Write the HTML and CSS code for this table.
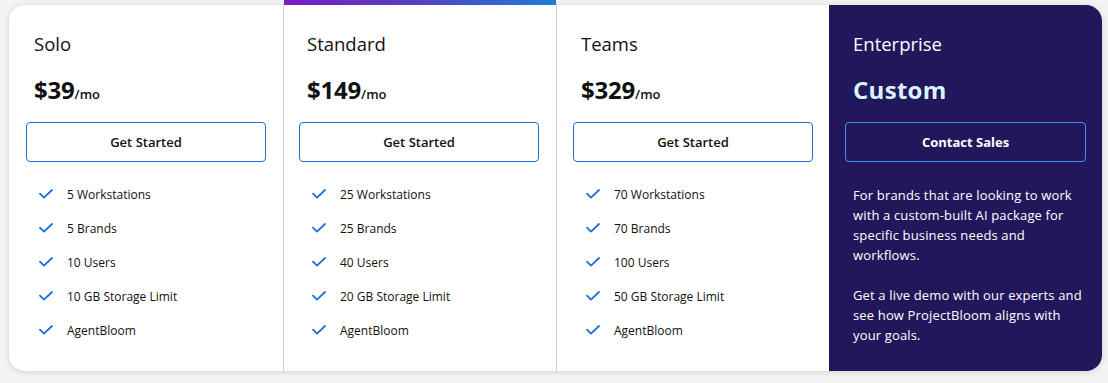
FILE: index.html
```html
<!DOCTYPE html>
<html>
<head>
<meta charset="utf-8">
<link rel="stylesheet" href="styles.css">
</head>
<body>
<div class="pricing">
  <section class="plan plan--first">
    <h2 class="plan__name">Solo</h2>
    <div class="plan__price"><span class="plan__amount">$39</span><span class="plan__per">/mo</span></div>
    <a class="plan__btn">Get Started</a>
    <ul class="plan__features">
      <li><svg class="check" viewBox="0 0 14 10"><path d="M1 4.6 L5 8.6 L13 1"/></svg>5 Workstations</li>
      <li><svg class="check" viewBox="0 0 14 10"><path d="M1 4.6 L5 8.6 L13 1"/></svg>5 Brands</li>
      <li><svg class="check" viewBox="0 0 14 10"><path d="M1 4.6 L5 8.6 L13 1"/></svg>10 Users</li>
      <li><svg class="check" viewBox="0 0 14 10"><path d="M1 4.6 L5 8.6 L13 1"/></svg>10 GB Storage Limit</li>
      <li><svg class="check" viewBox="0 0 14 10"><path d="M1 4.6 L5 8.6 L13 1"/></svg>AgentBloom</li>
    </ul>
  </section>
  <section class="plan plan--featured">
    <h2 class="plan__name">Standard</h2>
    <div class="plan__price"><span class="plan__amount">$149</span><span class="plan__per">/mo</span></div>
    <a class="plan__btn">Get Started</a>
    <ul class="plan__features">
      <li><svg class="check" viewBox="0 0 14 10"><path d="M1 4.6 L5 8.6 L13 1"/></svg>25 Workstations</li>
      <li><svg class="check" viewBox="0 0 14 10"><path d="M1 4.6 L5 8.6 L13 1"/></svg>25 Brands</li>
      <li><svg class="check" viewBox="0 0 14 10"><path d="M1 4.6 L5 8.6 L13 1"/></svg>40 Users</li>
      <li><svg class="check" viewBox="0 0 14 10"><path d="M1 4.6 L5 8.6 L13 1"/></svg>20 GB Storage Limit</li>
      <li><svg class="check" viewBox="0 0 14 10"><path d="M1 4.6 L5 8.6 L13 1"/></svg>AgentBloom</li>
    </ul>
  </section>
  <section class="plan">
    <h2 class="plan__name">Teams</h2>
    <div class="plan__price"><span class="plan__amount">$329</span><span class="plan__per">/mo</span></div>
    <a class="plan__btn">Get Started</a>
    <ul class="plan__features">
      <li><svg class="check" viewBox="0 0 14 10"><path d="M1 4.6 L5 8.6 L13 1"/></svg>70 Workstations</li>
      <li><svg class="check" viewBox="0 0 14 10"><path d="M1 4.6 L5 8.6 L13 1"/></svg>70 Brands</li>
      <li><svg class="check" viewBox="0 0 14 10"><path d="M1 4.6 L5 8.6 L13 1"/></svg>100 Users</li>
      <li><svg class="check" viewBox="0 0 14 10"><path d="M1 4.6 L5 8.6 L13 1"/></svg>50 GB Storage Limit</li>
      <li><svg class="check" viewBox="0 0 14 10"><path d="M1 4.6 L5 8.6 L13 1"/></svg>AgentBloom</li>
    </ul>
  </section>
  <section class="plan plan--enterprise">
    <h2 class="plan__name">Enterprise</h2>
    <div class="plan__price"><span class="plan__amount plan__amount--custom">Custom</span></div>
    <a class="plan__btn plan__btn--dark">Contact Sales</a>
    <div class="plan__desc">
      <p>For brands that are looking to work with a custom-built AI package for specific business needs and workflows.</p>
      <p>Get a live demo with our experts and see how ProjectBloom aligns with your goals.</p>
    </div>
  </section>
</div>
</body>
</html>
```

FILE: styles.css
```css
* { box-sizing: border-box; }

body {
  margin: 0;
  background: #f4f4f4;
  padding: 5px 6px 12px 9px;
  font-family: "Open Sans", "Liberation Sans", sans-serif;
  color: #111;
}

.pricing {
  display: grid;
  grid-template-columns: 274px 274px 272px 273px;
  width: 1093px;
  height: 366px;
  background: #fff;
  border-radius: 16px;
  box-shadow: 0 1px 7px rgba(0, 0, 0, 0.14);
}

.plan {
  position: relative;
  display: flex;
  flex-direction: column;
  padding: 27px 16px 0 16px;
}

.plan--first {
  padding-left: 17px;
}

.plan--featured {
  border-left: 1px solid #cfcfcf;
  border-right: 1px solid #cfcfcf;
  padding-left: 15px;
}

.plan--featured::before {
  content: "";
  position: absolute;
  left: 0;
  right: 0;
  top: -5px;
  height: 5px;
  background: linear-gradient(90deg, #7a1cc4 0%, #5a3cc0 45%, #1f7ed3 100%);
}

.plan--enterprise {
  background: #23175b;
  border-radius: 0 16px 16px 0;
  color: #fff;
}

.plan__name {
  margin: 0 0 0 8px;
  font-size: 18.5px;
  font-weight: 400;
  line-height: 24px;
}

.plan__price {
  margin: 18px 0 0 8px;
  height: 32px;
  display: flex;
  align-items: baseline;
}

.plan__amount {
  font-size: 24px;
  font-weight: 700;
  line-height: 32px;
  letter-spacing: -0.2px;
}

.plan__amount--custom {
  color: #d9f3fd;
  letter-spacing: 0.3px;
}

.plan__per {
  font-size: 13px;
  font-weight: 600;
}

.plan__btn {
  display: flex;
  align-items: center;
  justify-content: center;
  margin-top: 16px;
  width: 240px;
  height: 40px;
  border: 1.5px solid #1a6fd8;
  border-radius: 4px;
  font-size: 13px;
  font-weight: 600;
  color: #111;
}

.plan__btn--dark {
  border-color: #3b93ec;
  color: #fff;
  font-weight: 700;
  width: 241px;
}

.plan__features {
  list-style: none;
  margin: 15px 0 0 13px;
  padding: 0;
}

.plan__features li {
  display: flex;
  align-items: center;
  gap: 14px;
  height: 34px;
  font-size: 12px;
  font-weight: 500;
}

.check {
  width: 14px;
  height: 10px;
  flex: none;
  fill: none;
  stroke: #1a6fd8;
  stroke-width: 1.8;
  stroke-linecap: round;
  stroke-linejoin: round;
}

.plan__desc {
  margin: 23px 0 0 8px;
  max-width: 232px;
  font-size: 13px;
  letter-spacing: 0.15px;
  line-height: 20px;
  font-weight: 500;
}

.plan__desc p {
  margin: 0 0 20px;
}
```
